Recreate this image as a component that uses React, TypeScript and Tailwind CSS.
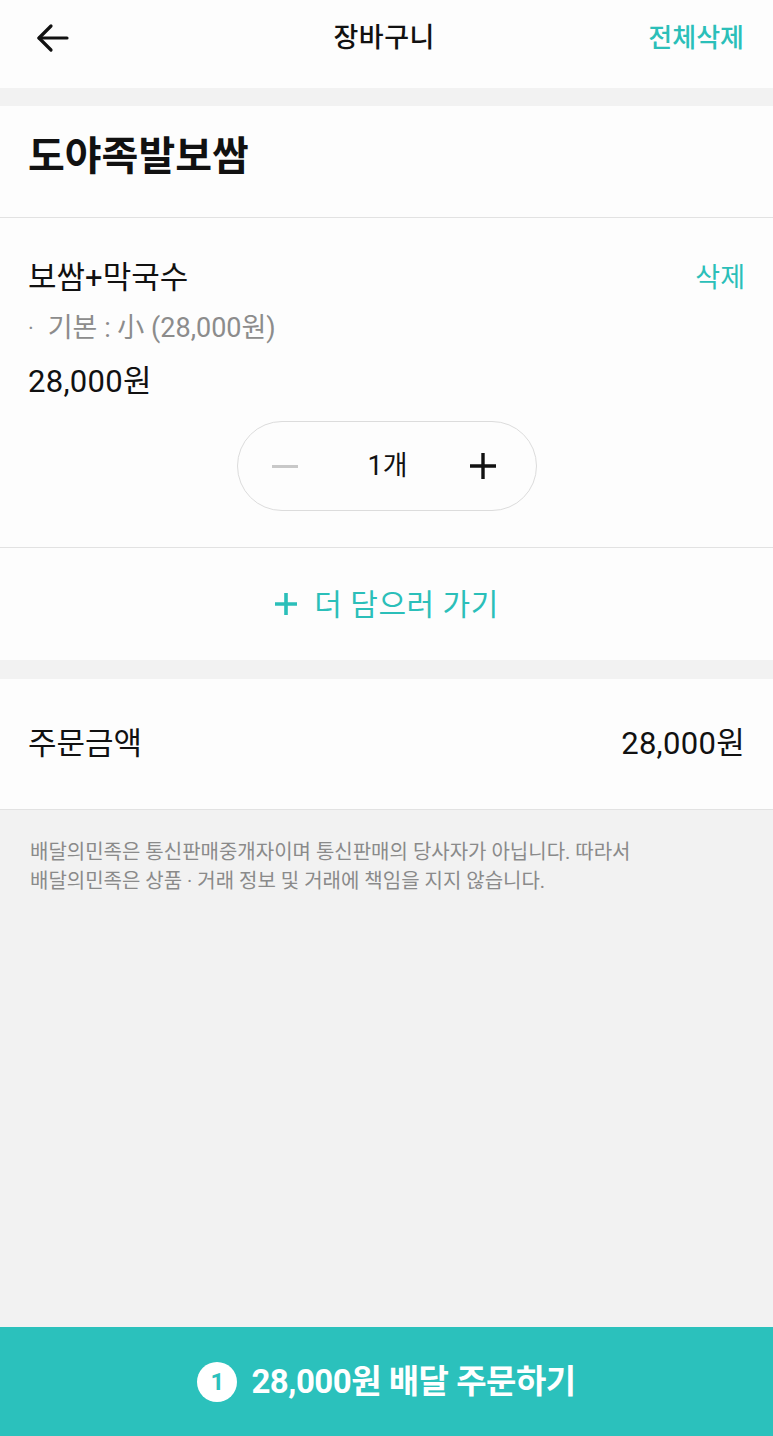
import React from "react";

export default function App() {
  const font = { fontFamily: 'Roboto, "Noto Sans CJK KR", sans-serif' };
  return (
    <div style={font} className="w-[773px] h-[1436px] bg-[#f2f2f2] flex flex-col text-[#111]">
      {/* Header */}
      <div className="h-[88px] bg-[#fdfdfd] flex items-center justify-between px-[36px] pb-[12px] shrink-0">
        <svg width="34" height="30" viewBox="0 0 34 30" fill="none" stroke="#111" strokeWidth="3.2" strokeLinecap="round" strokeLinejoin="round">
          <path d="M31 15H3" />
          <path d="M15 3L3 15l12 12" />
        </svg>
        <div className="text-[27px] font-medium ml-[50px] tracking-[0.5px]">장바구니</div>
        <div className="text-[26px] text-[#2bbfb9] font-medium -mr-[7px]">전체삭제</div>
      </div>
      <div className="h-[18px] shrink-0" />
      {/* Store */}
      <div className="h-[112px] bg-[#fdfdfd] flex items-center px-[28px] border-b border-[#e2e2e2] shrink-0">
        <div className="text-[40px] font-bold -mt-[10px]">도야족발보쌈</div>
      </div>
      {/* Item */}
      <div className="bg-[#fdfdfd] px-[28px] pt-[38px] border-b border-[#e2e2e2] h-[330px] shrink-0 flex flex-col">
        <div className="flex items-center justify-between h-[44px]">
          <div className="text-[31px]">보쌈+막국수</div>
          <div className="text-[27px] text-[#2bbfb9]">삭제</div>
        </div>
        <div className="text-[27px] text-[#8c8c8c] mt-[8px] h-[40px] flex items-center">
          <span className="mr-[14px] text-[22px]">·</span>기본 : 小 (28,000원)
        </div>
        <div className="text-[31px] mt-[14px] h-[40px] flex items-center tracking-[0.3px]">28,000원</div>
        <div className="flex justify-center mt-[19px]">
          <div className="w-[300px] h-[90px] rounded-full border border-[#dcdcdc] flex items-center justify-between pl-[34px] pr-[38px]">
            <div className="w-[26px] h-[3px] bg-[#c8c8c8]" />
            <div className="text-[27px] ml-[8px]">1개</div>
            <svg width="28" height="28" viewBox="0 0 28 28" stroke="#111" strokeWidth="3.4" strokeLinecap="butt">
              <path d="M14 1v26M1 14h26" />
            </svg>
          </div>
        </div>
      </div>
      {/* Add more */}
      <div className="h-[112px] bg-[#fdfdfd] flex items-center justify-center gap-[16px] shrink-0">
        <svg width="24" height="24" viewBox="0 0 24 24" stroke="#2bbfb9" strokeWidth="3.6">
          <path d="M12 1v22M1 12h22" />
        </svg>
        <div className="text-[30px] text-[#2bbfb9] tracking-[0.5px]">더 담으러 가기</div>
      </div>
      <div className="h-[19px] shrink-0" />
      {/* Order amount */}
      <div className="h-[131px] bg-[#fdfdfd] flex items-center justify-between px-[28px] border-b border-[#e2e2e2] shrink-0">
        <div className="text-[31px]">주문금액</div>
        <div className="text-[31px] tracking-[0.3px]">28,000원</div>
      </div>
      {/* Disclaimer */}
      <div className="flex-1 px-[30px] pt-[28px] text-[20px] leading-[29px] text-[#8a8a8a]">
        <div>배달의민족은 통신판매중개자이며 통신판매의 당사자가 아닙니다. 따라서</div>
        <div>배달의민족은 상품 · 거래 정보 및 거래에 책임을 지지 않습니다.</div>
      </div>
      {/* Order button */}
      <div className="h-[109px] bg-[#2bc1bc] flex items-center justify-center gap-[14px] shrink-0">
        <div className="w-[40px] h-[40px] rounded-full bg-white flex items-center justify-center text-[#2bc1bc] text-[24px] font-bold">1</div>
        <div className="text-[33px] font-bold text-white tracking-[-0.5px]">28,000원 배달 주문하기</div>
      </div>
    </div>
  );
}
